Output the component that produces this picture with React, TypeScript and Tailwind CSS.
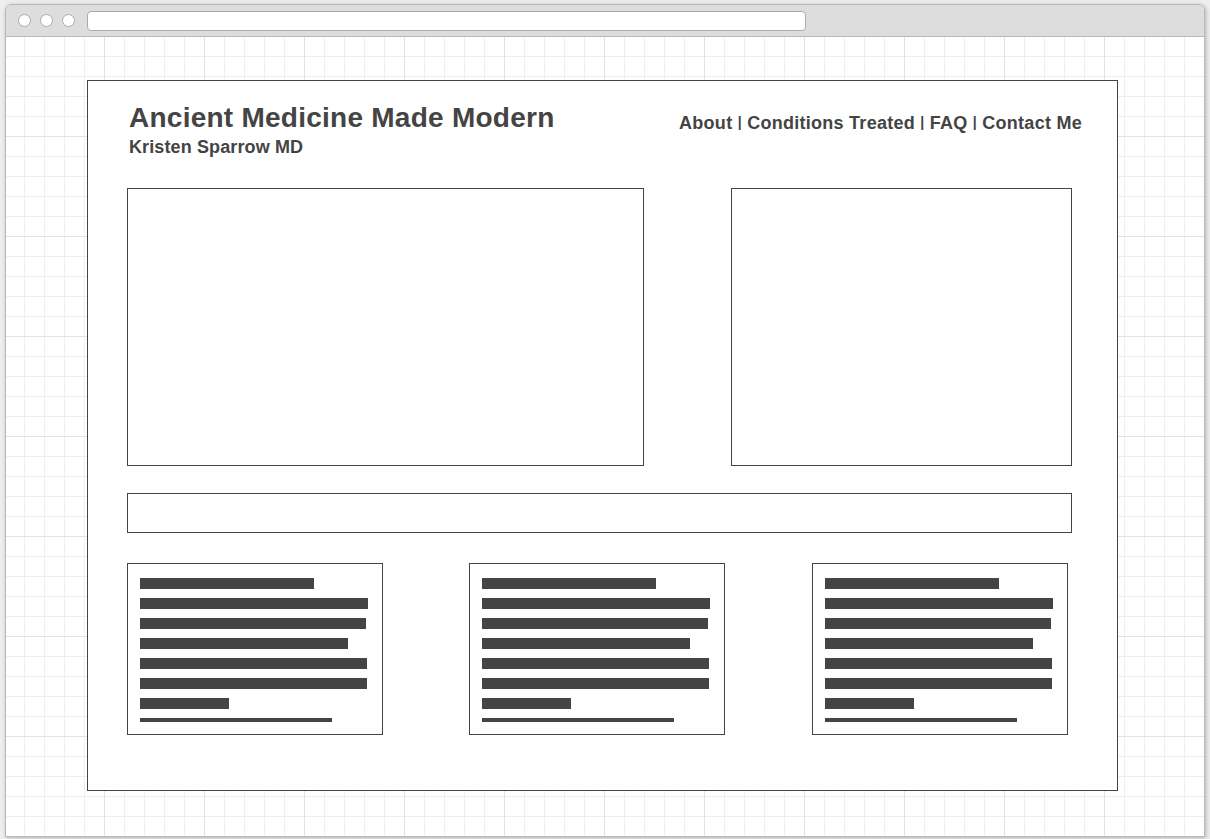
const bars = [174, 228, 226, 208, 227, 227, 89];

function Card() {
  return (
    <div className="w-[256px] h-[172px] border border-[#444] bg-white pl-[12px] pt-[14px]">
      <div className="flex flex-col gap-[9px]">
        {bars.map((w, i) => (
          <div key={i} className="h-[11px] bg-[#444]" style={{ width: w }} />
        ))}
        <div className="h-[4px] w-[192px] bg-[#444]" />
      </div>
    </div>
  );
}

function Sep() {
  return <span className="text-[14px] leading-none font-bold align-[2px]">|</span>;
}

export default function App() {
  return (
    <div className="w-[1210px] h-[839px] bg-[#eeeeee] overflow-hidden pt-[4px] pl-[5px] font-['Liberation_Sans',Arial,sans-serif] text-[#444]">
      <div className="w-[1200px] h-[833px] border border-[#b8b8b8] rounded-t-[6px] overflow-hidden flex flex-col shadow-[1px_1px_4px_rgba(0,0,0,0.25)]">
        {/* window chrome */}
        <div className="h-[32px] shrink-0 bg-[#dddddd] border-b border-[#b8b8b8] flex items-center pl-[12px]">
          <div className="flex gap-[9px]">
            <div className="w-[13px] h-[13px] rounded-full bg-white border border-[#aaa]" />
            <div className="w-[13px] h-[13px] rounded-full bg-white border border-[#aaa]" />
            <div className="w-[13px] h-[13px] rounded-full bg-white border border-[#aaa]" />
          </div>
          <div className="ml-[12px] w-[719px] h-[20px] bg-white border border-[#aaa] rounded-[4px]" />
        </div>

        {/* canvas */}
        <div className="flex-1 bg-white [background-image:linear-gradient(to_right,#e2e2e2_1px,transparent_1px),linear-gradient(to_bottom,#e2e2e2_1px,transparent_1px),linear-gradient(to_right,#eeeeee_1px,transparent_1px),linear-gradient(to_bottom,#eeeeee_1px,transparent_1px)] [background-size:100px_100px,100px_100px,20px_20px,20px_20px] [background-position:98px_0,0_99px,18px_0,0_19px] pl-[81px] pt-[43px]">
          <div className="w-[1031px] h-[711px] border border-[#444] bg-white pl-[39px] pt-[21px]">
            <div className="ml-[2px] w-[953px] flex justify-between items-start">
              <div>
                <h1 className="text-[28px] leading-[32px] font-bold tracking-[0.25px]">Ancient Medicine Made Modern</h1>
                <div className="mt-[2px] text-[18px] leading-[22px] font-bold tracking-[0.12px]">Kristen Sparrow MD</div>
              </div>
              <nav className="mt-[10px] text-[18px] leading-[22px] font-bold tracking-[0.27px] whitespace-nowrap">
                About <Sep /> Conditions Treated <Sep /> FAQ <Sep /> Contact Me
              </nav>
            </div>

            <div className="mt-[30px] w-[945px] flex justify-between">
              <div className="w-[517px] h-[278px] border border-[#444]" />
              <div className="w-[341px] h-[278px] border border-[#444]" />
            </div>

            <div className="mt-[27px] w-[945px] h-[40px] border border-[#444]" />

            <div className="mt-[30px] flex">
              <Card />
              <div className="ml-[86px]">
                <Card />
              </div>
              <div className="ml-[87px]">
                <Card />
              </div>
            </div>
          </div>
        </div>
      </div>
    </div>
  );
}
